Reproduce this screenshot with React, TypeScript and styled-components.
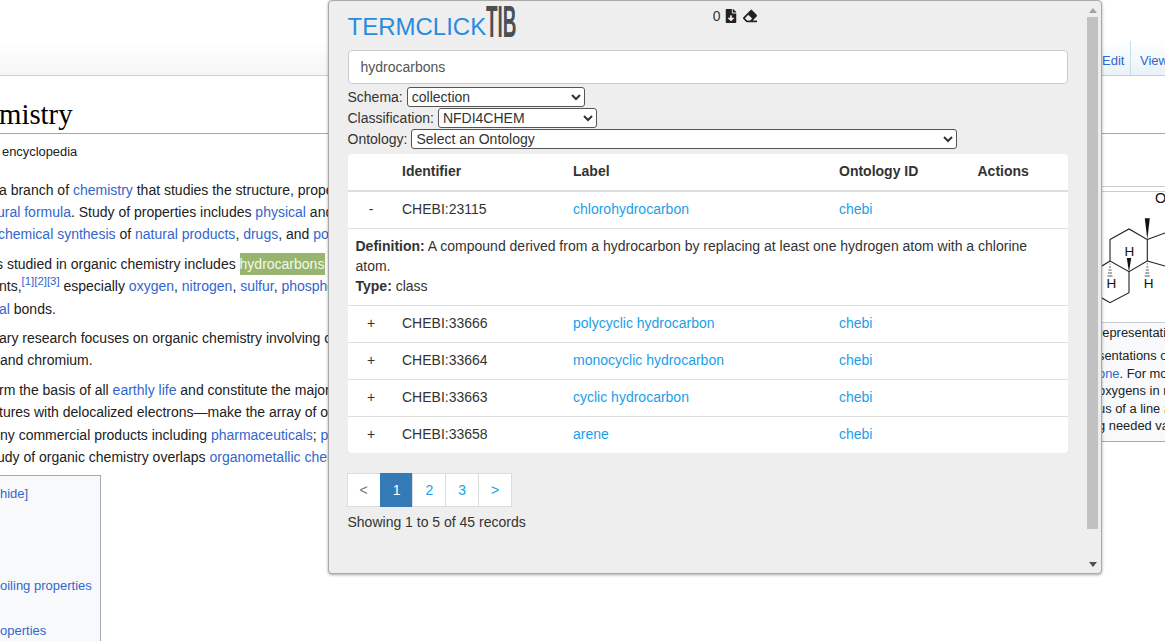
import * as React from "react";
import styled, { createGlobalStyle } from "styled-components";
import { FaEraser, FaFileDownload } from "react-icons/fa";

const GlobalStyle = createGlobalStyle`
    html, body {
        margin: 0;
        padding: 0;
        background: #fff;
        font-family: "Liberation Sans", Arial, sans-serif;
    }
`;

const Page = styled.div`
    position: relative;
    width: 1165px;
    height: 641px;
    overflow: hidden;
    background: #fff;
    color: #202122;
`;

// Wikipedia page underneath
const TopBar = styled.div`
    height: 75px;
    display: flex;
    justify-content: flex-end;
    align-items: flex-end;
    border-bottom: 1px solid #a7d7f9;
    background: linear-gradient(#fff 40px, #f6f6f6 75px);
`;

const Tab = styled.a<{ $w: number; $pad: number }>`
    width: ${(p) => p.$w}px;
    height: 34px;
    padding: 12px 0 0 ${(p) => p.$pad}px;
    box-sizing: border-box;
    font-size: 13px;
    color: #3366cc;
    white-space: nowrap;
    overflow: hidden;
    background: linear-gradient(#fff, #e8f2f8);
    border-right: 1px solid #c5dfef;

    &:last-child {
        border-right: 0;
    }
`;

const Heading = styled.h1`
    margin: 0;
    height: 58px;
    padding-top: 21px;
    box-sizing: border-box;
    border-bottom: 1px solid #a2a9b1;
    font: 400 28.8px/34px "Liberation Serif", serif;
    color: #000;
    text-indent: -1px;
`;

const Body = styled.div`
    display: flex;
    justify-content: space-between;
    height: 507px;
`;

const Article = styled.div`
    width: 328px;
    overflow: hidden;
`;

const Tagline = styled.div`
    margin: 10px 0 18.7px;
    padding-left: 2px;
    font-size: 12.88px;
    line-height: 16px;
`;

const Para = styled.div`
    margin-bottom: 7px;
`;

const Line = styled.div<{ $x?: number }>`
    height: 22.4px;
    line-height: 22px;
    font-size: 14px;
    white-space: nowrap;
    margin-left: ${(p) => p.$x ?? 0}px;
`;

const WikiLink = styled.a`
    color: #3366cc;
`;

const Sup = styled.sup`
    font-size: 11.4px;
    line-height: 0;
    color: #3366cc;
`;

const Highlight = styled.span`
    display: inline-block;
    height: 22px;
    padding-right: 1px;
    background: #97b56f;
    color: #f4f8e8;
`;

const Toc = styled.div`
    width: 101px;
    height: 170px;
    box-sizing: border-box;
    border: 1px solid #a2a9b1;
    border-left: 0;
    background: #f8f9fa;
    font-size: 13px;
    overflow: hidden;
`;

const TocRow = styled.div<{ $top: number }>`
    margin-top: ${(p) => p.$top}px;
    height: 20px;
    line-height: 20px;
    white-space: nowrap;
    color: #3366cc;
`;

const InfoBox = styled.div`
    width: 63px;
    margin-top: 52px;
    height: 256px;
    box-sizing: border-box;
    padding-top: 4px;
    border-top: 1px solid #c8ccd1;
    border-bottom: 1px solid #a2a9b1;
    background: #fff;
    overflow: hidden;
`;

const InfoImage = styled.div`
    height: 131px;
    box-sizing: border-box;
    border-top: 1px solid #c8ccd1;
`;

const InfoCaption = styled.div`
    height: 120px;
    box-sizing: border-box;
    border-top: 1px solid #c8ccd1;
    background: #f8f9fa;
    padding-top: 1px;
    font-size: 12.88px;
    line-height: 17.4px;
    white-space: nowrap;
`;

const InfoLine = styled.div`
    height: 17.4px;
    margin-left: -4px;
`;

const InfoTitle = styled(InfoLine)`
    margin-bottom: 6px;
`;

const MissingLink = styled.a`
    color: #d9a23c;
`;

// Extension popup
const Popup = styled.div`
    position: absolute;
    left: 328px;
    top: 0;
    width: 774px;
    height: 574px;
    box-sizing: border-box;
    display: flex;
    background: #eee;
    border: 1px solid #a9a9a9;
    border-radius: 4px;
    box-shadow: 0 1px 3px rgba(0, 0, 0, 0.35);
    color: #333;
    font-size: 14px;
    overflow: hidden;
`;

const PopupBody = styled.div`
    flex: 1;
    min-width: 0;
    padding: 0 18px 0 19px;
`;

const LogoRow = styled.div`
    height: 49px;
    display: flex;
    align-items: flex-start;
    margin-left: -0.5px;
`;

const LogoText = styled.span`
    margin-top: 12px;
    font-size: 24px;
    line-height: 28px;
    color: #2a8bdc;
`;

const LogoMark = styled.span`
    display: inline-block;
    width: 30px;
    height: 30px;
    margin-top: 5px;
    font: 700 44px/32px "Liberation Sans", sans-serif;
    color: #4a4f54;
    transform: scaleX(0.43);
    transform-origin: left center;
    white-space: nowrap;
`;

const Counter = styled.div`
    margin-left: 196.5px;
    margin-top: 6px;
    display: flex;
    align-items: center;
    gap: 4px;
    height: 18px;
`;

const CounterIcons = styled.span`
    display: flex;
    align-items: center;
    gap: 5px;
    color: #222;
`;

const SearchInput = styled.input`
    display: block;
    width: 100%;
    height: 34px;
    box-sizing: border-box;
    padding: 6px 11.5px;
    border: 1px solid #ccc;
    border-radius: 4px;
    background: #fff;
    font: 14px/20px "Liberation Sans", sans-serif;
    color: #555;
`;

const FilterRow = styled.div`
    height: 21px;
    margin-left: -0.5px;
    display: flex;
    align-items: center;
    gap: 4px;
`;

const FirstFilter = styled(FilterRow)`
    margin-top: 2px;
`;

const FilterSelect = styled.select<{ $w: number }>`
    width: ${(p) => p.$w}px;
    height: 20px;
    padding: 0;
    font: 14px "Liberation Sans", sans-serif;
    color: #333;
    background: #fff;
    border: 1px solid #555;
    border-radius: 3px;
`;

const TableCard = styled.div`
    margin-top: 5px;
    background: #fff;
    border-radius: 4px;
    overflow: hidden;
`;

const Table = styled.table`
    width: 100%;
    table-layout: fixed;
    border-collapse: collapse;
    line-height: 20px;
`;

const Th = styled.th`
    height: 36px;
    padding: 7px 8px 9px;
    box-sizing: border-box;
    text-align: left;
    font-weight: 700;
    border-bottom: 2px solid #ddd;
`;

const Td = styled.td`
    padding: 7px 8px 9px;
    border-top: 1px solid #ddd;
`;

const DetailCell = styled(Td)`
    padding-left: 7.5px;
`;

const ToggleCell = styled(Td)`
    text-align: center;
`;

const TermLink = styled.a`
    color: #1b9ee8;
`;

const FirstRowTd = styled(Td)`
    border-top: 0;
`;

const FirstRowToggle = styled(ToggleCell)`
    border-top: 0;
`;

const Pager = styled.div`
    display: flex;
    margin: 20px 0 0 -1.5px;
`;

const PageItem = styled.a<{ $active?: boolean; $muted?: boolean }>`
    height: 34px;
    padding: 6px 12px;
    box-sizing: border-box;
    margin-left: -1px;
    line-height: 20px;
    border: 1px solid ${(p) => (p.$active ? "#337ab7" : "#ddd")};
    background: ${(p) => (p.$active ? "#337ab7" : "#fff")};
    color: ${(p) => (p.$active ? "#fff" : p.$muted ? "#777" : "#1b9ee8")};

    &:first-child {
        margin-left: 0;
    }
`;

const Summary = styled.div`
    margin: 5px 0 0 -0.5px;
    line-height: 20px;
`;

const ScrollBar = styled.div`
    width: 15px;
    display: flex;
    flex-direction: column;
    flex: none;
`;

const ScrollArrow = styled.div<{ $up?: boolean }>`
    height: 16px;
    box-sizing: border-box;
    padding: ${(p) => (p.$up ? "3px 3px 0 1px" : "0 3px 1px 1px")};
    display: flex;
    align-items: center;
    justify-content: center;
    flex: none;
`;

const ScrollThumb = styled.div`
    height: 512px;
    margin: 0 3px 0 1px;
    background: #c1c1c1;
    flex: none;
`;

const ScrollTrack = styled.div`
    flex: 1;
`;

function Arrow({ up }: { up: boolean }): JSX.Element {
    return (
        <svg width="8" height="5" viewBox="0 0 8 5">
            <path d={up ? "M4 0 L8 5 L0 5 Z" : "M0 0 L8 0 L4 5 Z"} fill={up ? "#a3a3a3" : "#505050"} />
        </svg>
    );
}

function Molecule(): JSX.Element {
    return (
        <svg width="63" height="130" viewBox="0 0 63 130" fontFamily="Liberation Sans, sans-serif">
            <g fill="none" stroke="#222" strokeWidth="1.1">
                <path d="M8 47.5 L27 37 L45.3 47.5 L45.3 69 L27 79.7 L8 69 Z" />
                <path d="M45.3 47.5 L63 41" />
                <path d="M45.3 69 L63 74" />
                <path d="M8 69 L0 74" />
                <path d="M27 79.7 L27 100.7 L8 110.7 L0 106" />
            </g>
            <path d="M45.3 47.5 L42.8 26.3 L47.8 26.3 Z" fill="#111" />
            <path d="M27 80 L24.8 66 L29.2 66 Z" fill="#111" />
            <g stroke="#555" strokeWidth="1">
                <path d="M7.5 72 h1 M7 75 h2 M6.5 78 h3 M6 81 h4 M5.5 84 h5" />
                <path d="M44.8 72 h1 M44.3 75 h2 M43.8 78 h3 M43.3 81 h4 M42.8 84 h5" />
            </g>
            <text x="22.5" y="63.5" fontSize="13.5" fill="#111">H</text>
            <text x="4.5" y="96" fontSize="13.5" fill="#111">H</text>
            <text x="41.8" y="96" fontSize="13.5" fill="#111">H</text>
            <text x="53" y="10.5" fontSize="14.5" fill="#111">O</text>
        </svg>
    );
}

const rows = [
    { id: "CHEBI:33666", label: "polycyclic hydrocarbon" },
    { id: "CHEBI:33664", label: "monocyclic hydrocarbon" },
    { id: "CHEBI:33663", label: "cyclic hydrocarbon" },
    { id: "CHEBI:33658", label: "arene" },
];

export default function App(): JSX.Element {
    return (
        <Page>
            <GlobalStyle />
            <TopBar>
                <Tab $w={36} $pad={7}>Edit</Tab>
                <Tab $w={34} $pad={9}>View</Tab>
            </TopBar>
            <Heading>mistry</Heading>
            <Body>
                <Article>
                    <Tagline>encyclopedia</Tagline>
                    <Para>
                        <Line $x={-1}>a branch of <WikiLink>chemistry</WikiLink> that studies the structure, properties</Line>
                        <Line $x={-3}><WikiLink>ural formula</WikiLink>. Study of properties includes <WikiLink>physical</WikiLink> and</Line>
                        <Line $x={-2}><WikiLink>chemical synthesis</WikiLink> of <WikiLink>natural products</WikiLink>, <WikiLink>drugs</WikiLink>, and <WikiLink>polymers</WikiLink></Line>
                    </Para>
                    <Para>
                        <Line $x={-4}>s studied in organic chemistry includes <Highlight>hydrocarbons</Highlight></Line>
                        <Line $x={-1}>nts,<Sup>[1][2][3]</Sup> especially <WikiLink>oxygen</WikiLink>, <WikiLink>nitrogen</WikiLink>, <WikiLink>sulfur</WikiLink>, <WikiLink>phosphorus</WikiLink></Line>
                        <Line $x={-1}><WikiLink>al</WikiLink> bonds.</Line>
                    </Para>
                    <Para>
                        <Line $x={-1}>ary research focuses on organic chemistry involving organic</Line>
                        <Line>and chromium.</Line>
                    </Para>
                    <Para>
                        <Line $x={-1}>rm the basis of all <WikiLink>earthly life</WikiLink> and constitute the majority</Line>
                        <Line $x={-1}>tures with delocalized electrons—make the array of organic</Line>
                        <Line>ny commercial products including <WikiLink>pharmaceuticals</WikiLink>; <WikiLink>plastics</WikiLink></Line>
                        <Line $x={-3}>udy of organic chemistry overlaps <WikiLink>organometallic chemistry</WikiLink></Line>
                    </Para>
                    <Toc>
                        <TocRow $top={8}><WikiLink>hide</WikiLink>]</TocRow>
                        <TocRow $top={72}>oiling properties</TocRow>
                        <TocRow $top={25}>operties</TocRow>
                    </Toc>
                </Article>
                <InfoBox>
                    <InfoImage>
                        <Molecule />
                    </InfoImage>
                    <InfoCaption>
                        <InfoTitle>representation</InfoTitle>
                        <InfoLine>sentations of</InfoLine>
                        <InfoLine><WikiLink>one</WikiLink>. For mo</InfoLine>
                        <InfoLine>oxygens in m</InfoLine>
                        <InfoLine>us of a line <MissingLink>a</MissingLink></InfoLine>
                        <InfoLine>g needed va</InfoLine>
                    </InfoCaption>
                </InfoBox>
            </Body>
            <Popup>
                <PopupBody>
                    <LogoRow>
                        <LogoText>TERMCLICK</LogoText>
                        <LogoMark>TIB</LogoMark>
                        <Counter>
                            0
                            <CounterIcons>
                                <FaFileDownload size={14} />
                                <FaEraser size={14} />
                            </CounterIcons>
                        </Counter>
                    </LogoRow>
                    <SearchInput defaultValue="hydrocarbons" />
                    <FirstFilter>
                        Schema:
                        <FilterSelect $w={178}>
                            <option>collection</option>
                        </FilterSelect>
                    </FirstFilter>
                    <FilterRow>
                        Classification:
                        <FilterSelect $w={159}>
                            <option>NFDI4CHEM</option>
                        </FilterSelect>
                    </FilterRow>
                    <FilterRow>
                        Ontology:
                        <FilterSelect $w={546}>
                            <option>Select an Ontology</option>
                        </FilterSelect>
                    </FilterRow>
                    <TableCard>
                        <Table>
                            <colgroup>
                                <col width="46" />
                                <col width="171" />
                                <col width="266" />
                                <col width="138.5" />
                                <col />
                            </colgroup>
                            <thead>
                                <tr>
                                    <Th />
                                    <Th>Identifier</Th>
                                    <Th>Label</Th>
                                    <Th>Ontology ID</Th>
                                    <Th>Actions</Th>
                                </tr>
                            </thead>
                            <tbody>
                                <tr>
                                    <FirstRowToggle>-</FirstRowToggle>
                                    <FirstRowTd>CHEBI:23115</FirstRowTd>
                                    <FirstRowTd><TermLink>chlorohydrocarbon</TermLink></FirstRowTd>
                                    <FirstRowTd><TermLink>chebi</TermLink></FirstRowTd>
                                    <FirstRowTd />
                                </tr>
                                <tr>
                                    <DetailCell colSpan={5}>
                                        <strong>Definition:</strong> A compound derived from a hydrocarbon by replacing at least one hydrogen atom with a chlorine atom.
                                        <br />
                                        <strong>Type:</strong> class
                                    </DetailCell>
                                </tr>
                                {rows.map((row) => (
                                    <tr key={row.id}>
                                        <ToggleCell>+</ToggleCell>
                                        <Td>{row.id}</Td>
                                        <Td><TermLink>{row.label}</TermLink></Td>
                                        <Td><TermLink>chebi</TermLink></Td>
                                        <Td />
                                    </tr>
                                ))}
                            </tbody>
                        </Table>
                    </TableCard>
                    <Pager>
                        <PageItem $muted>&lt;</PageItem>
                        <PageItem $active>1</PageItem>
                        <PageItem>2</PageItem>
                        <PageItem>3</PageItem>
                        <PageItem>&gt;</PageItem>
                    </Pager>
                    <Summary>Showing 1 to 5 of 45 records</Summary>
                </PopupBody>
                <ScrollBar>
                    <ScrollArrow $up><Arrow up /></ScrollArrow>
                    <ScrollThumb />
                    <ScrollTrack />
                    <ScrollArrow><Arrow up={false} /></ScrollArrow>
                </ScrollBar>
            </Popup>
        </Page>
    );
}
